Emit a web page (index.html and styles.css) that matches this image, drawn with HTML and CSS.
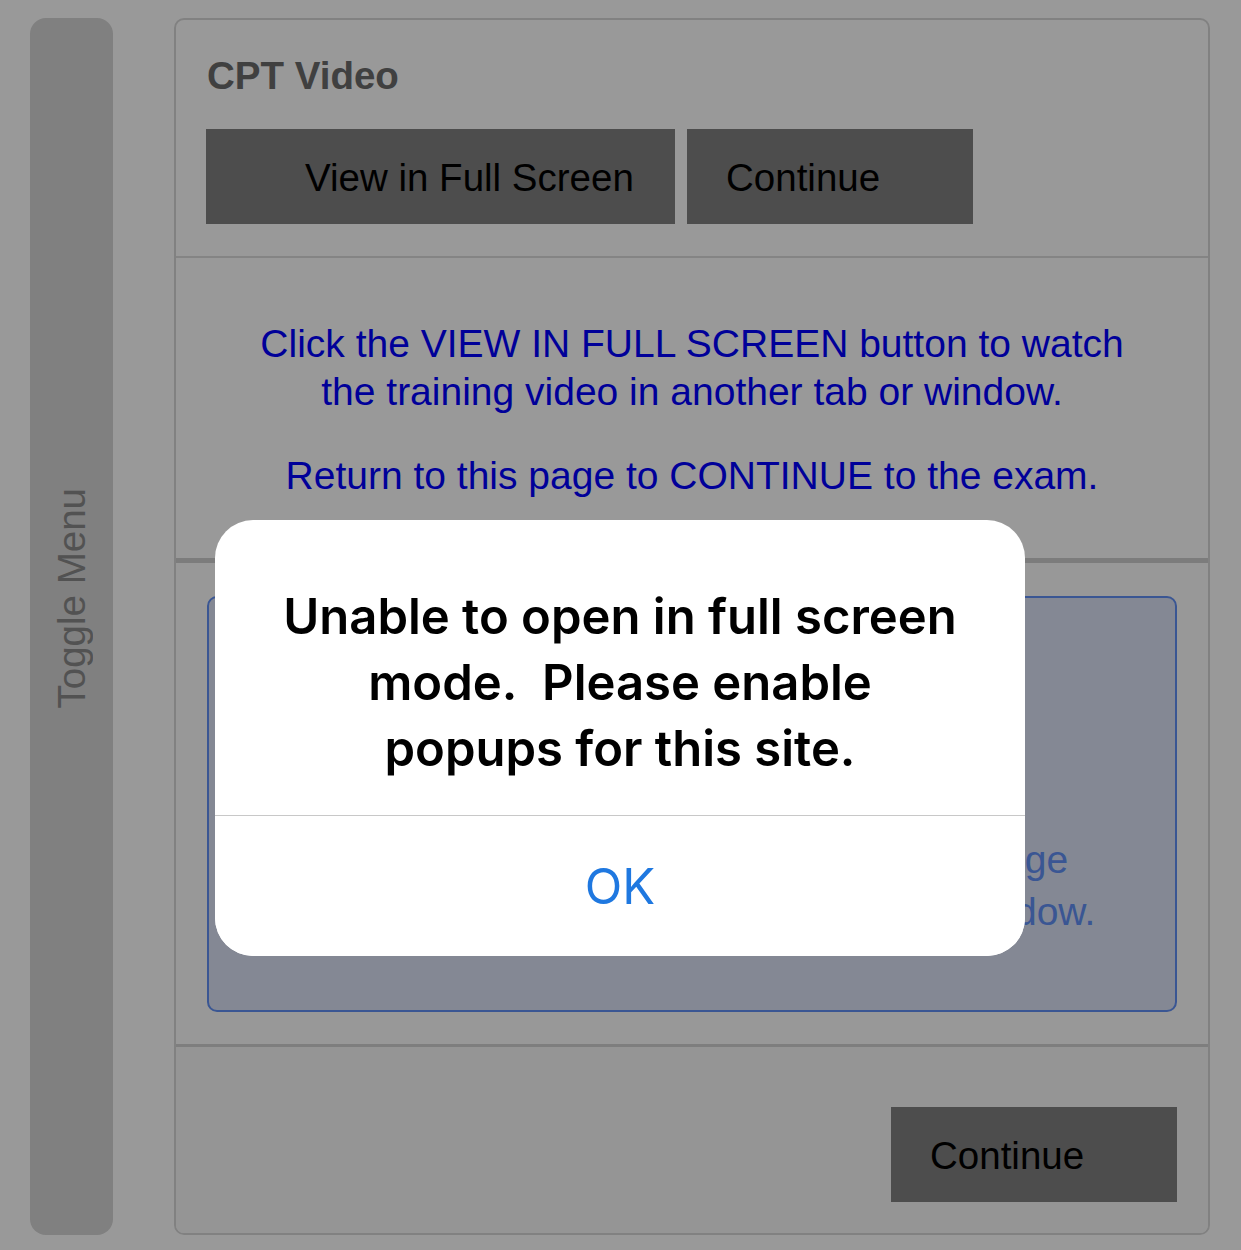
FILE: index.html
```html
<!DOCTYPE html>
<html lang="en">
<head>
<meta charset="utf-8">
<title>CPT Video</title>
<link rel="stylesheet" href="styles.css">
</head>
<body>
<div class="page">
  <aside class="sidebar">
    <span class="sidebar-label">Toggle Menu</span>
  </aside>
  <main class="card">
    <section class="card-header">
      <h1 class="card-title">CPT Video</h1>
      <div class="btn-row">
        <button class="btn btn-full">View in Full Screen</button>
        <button class="btn btn-continue">Continue</button>
      </div>
    </section>
    <section class="card-info">
      <p class="info-text">Click the VIEW IN FULL SCREEN button to watch<br>the training video in another tab or window.</p>
      <p class="info-text">Return to this page to CONTINUE to the exam.</p>
    </section>
    <section class="card-video">
      <div class="video-box">
        <p class="video-text">When your video is over, return to this page<br>and continue the exam in this browser window.</p>
      </div>
    </section>
    <section class="card-footer">
      <button class="btn btn-continue">Continue</button>
    </section>
  </main>
</div>
<div class="overlay">
  <div class="alert">
    <p class="alert-title">Unable to open in full screen<br>mode.&nbsp; Please enable<br>popups for this site.</p>
    <button class="alert-btn">OK</button>
  </div>
</div>
</body>
</html>
```
FILE: styles.css
```css
html, body {
  margin: 0;
  padding: 0;
  background: #ffffff;
}
body {
  width: 1241px;
  height: 1250px;
  overflow: hidden;
  font-family: "Liberation Sans", Arial, sans-serif;
}
.page {
  display: flex;
  gap: 61px;
  height: 1250px;
  box-sizing: border-box;
  padding: 18px 31px 15px 30px;
}
.sidebar {
  width: 83px;
  flex: none;
  background: #d5d5d5;
  border-radius: 16px;
  display: flex;
  align-items: center;
  justify-content: center;
  padding-bottom: 56px;
  box-sizing: border-box;
}
.sidebar-label {
  writing-mode: vertical-rl;
  transform: rotate(180deg);
  font-size: 38.5px;
  line-height: 44px;
  color: #898989;
  white-space: nowrap;
}
.card {
  flex: 1;
  border: 2px solid #d8d8d8;
  border-radius: 10px;
  display: flex;
  flex-direction: column;
  overflow: hidden;
}
.card-header {
  padding: 34px 31px 32px 30px;
  border-bottom: 2px solid #dcdcdc;
}
.card-title {
  margin: 0 0 31px 1px;
  font-size: 38.5px;
  line-height: 44px;
  font-weight: bold;
  color: #6b6b6b;
}
.btn-row {
  display: flex;
  gap: 12px;
}
.btn {
  height: 95px;
  border: none;
  margin: 0;
  background: #808080;
  color: #000000;
  font-family: "Liberation Sans", Arial, sans-serif;
  font-size: 38.5px;
  text-align: left;
  box-sizing: border-box;
  display: flex;
  align-items: center;
  border-radius: 0;
  padding-top: 3px;
}
.btn-full {
  width: 469px;
  padding-left: 99px;
}
.btn-continue {
  width: 286px;
  padding-left: 39px;
}
.card-info {
  padding: 62px 30px 58px;
  border-bottom: 5px solid #cfcfcf;
  text-align: center;
}
.info-text {
  margin: 0;
  font-size: 39px;
  line-height: 48px;
  color: #0000ff;
}
.info-text + .info-text {
  margin-top: 36px;
}
.card-video {
  padding: 33px 31px 32px;
  border-bottom: 3px solid #d2d2d2;
  background: #fdfdfd;
}
.video-box {
  height: 416px;
  box-sizing: border-box;
  border: 2px solid #6290f5;
  border-radius: 10px;
  background: #dce3f7;
  display: flex;
  flex-direction: column;
  justify-content: flex-end;
  padding: 0 20px 72px;
}
.video-text {
  margin: 0;
  text-align: center;
  font-size: 39px;
  line-height: 52px;
  color: #6290f5;
}
.card-footer {
  flex: 1;
  display: flex;
  justify-content: flex-end;
  align-items: flex-start;
  padding: 60px 31px 0;
  background: #f8f8f8;
}
.overlay {
  position: fixed;
  inset: 0;
  background: rgba(0, 0, 0, 0.4);
  display: flex;
  justify-content: center;
  align-items: flex-start;
  padding: 520px 1px 0 0;
  box-sizing: border-box;
}
.alert {
  width: 810px;
  background: #ffffff;
  border-radius: 38px;
  overflow: hidden;
  display: flex;
  flex-direction: column;
}
.alert-title {
  margin: 0;
  padding: 64px 20px 33px;
  font-family: Inter, "Noto Sans", sans-serif;
  font-weight: 600;
  font-size: 49px;
  line-height: 66px;
  text-align: center;
  color: #000000;
}
.alert-btn {
  height: 141px;
  border: none;
  border-top: 1px solid #c8c8c8;
  background: #ffffff;
  margin: 0;
  padding: 0;
  font-family: Inter, "Noto Sans", sans-serif;
  font-size: 49px;
  color: #1f78e0;
}
```
